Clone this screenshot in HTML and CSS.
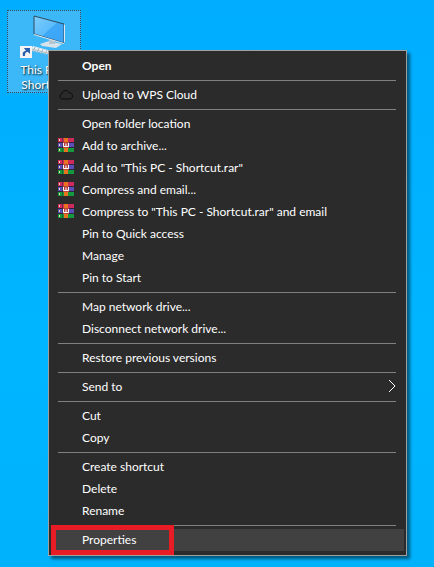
FILE: index.html
```
<!DOCTYPE html>
<html lang="en">
<head>
    <meta charset="UTF-8">
    <meta name="viewport" content="width=device-width, initial-scale=1.0">
    <title>Desktop</title>
    <link rel="stylesheet" href="styles.css">
</head>
<body>
    <svg class="sprite" width="0" height="0" aria-hidden="true">
        <symbol id="rar" viewBox="0 0 16 14">
            <rect width="16" height="4" fill="#cf2a5c"/>
            <rect y="5" width="16" height="4" fill="#5a4fb8"/>
            <rect y="10" width="16" height="4" fill="#129a3c"/>
            <path d="M0 4h16v1H0zM0 9h16v1H0z" fill="#33203a"/>
            <path d="M1 1h1v2H1zM1 6h1v2H1zM1 11h1v2H1z" fill="#f0d8b0"/>
            <path d="M4 0h1v4H4zM4 5h1v4H4zM4 10h1v4H4z" fill="#2b2b2b" opacity="0.5"/>
            <rect x="6" width="4" height="14" fill="#e87420"/>
            <rect x="5" y="4" width="6" height="6" fill="#b8453c"/>
            <path d="M5.500 5v3.500h5V5M8 5.500V9" fill="none" stroke="#fff" stroke-width="1"/>
        </symbol>
    </svg>

    <div class="desktop">
        <a href="#" class="shortcut">
            <svg class="pc" viewBox="0 0 48 40" width="48" height="40" aria-hidden="true">
                <defs>
                    <linearGradient id="screen" x1="0" y1="0" x2="1" y2="1">
                        <stop offset="0" stop-color="#7fcdfc"/>
                        <stop offset="0.500" stop-color="#5bbcfb"/>
                        <stop offset="0.510" stop-color="#3fa9f8"/>
                        <stop offset="1" stop-color="#3aa2f4"/>
                    </linearGradient>
                </defs>
                <path d="M20 29l9-3 13 3-6 4-14-2z" fill="#d5e2ea"/>
                <path d="M29 23h6v6h-6z" fill="#b4c6d1"/>
                <path d="M14 1l30 8v19l-30-9z" fill="url(#screen)" stroke="#2c4a60" stroke-width="1"/>
                <path d="M44 9l1 1v18l-1-1z" fill="#dce6ec"/>
                <path d="M14 19l30 9v1l-30-9z" fill="#e4edf2"/>
                <path d="M13 31l22 6v4L10 35z" fill="#e9eef1"/>
                <path d="M12 34l22 6M15 32l-2 5M19 33l-2 5M23 34l-2 5M27 35l-2 5" stroke="#a9b8c1" fill="none"/>
                <rect x="0" y="31" width="12" height="12" fill="#f4f4f4"/>
                <path d="M3 41c-1-4 1-5 3-5L4 33h6v6l-2-2c-3 0-3 2-3 4z" fill="#2b5fae"/>
            </svg>
            <span class="shortcut-name">This PC - Shortcut</span>
        </a>

        <div class="menu" role="menu">
            <button class="item default" role="menuitem">Open</button>
            <hr>
            <button class="item" role="menuitem">
                <svg class="icon" viewBox="0 0 16 14" aria-hidden="true">
                    <path d="M5 12C1 12 1 7 4 7c0-4 6-5 7-1 4-1 5 6 1 6z" fill="none" stroke="#0c0c0c" stroke-width="1"/>
                </svg>
                Upload to WPS Cloud
            </button>
            <hr>
            <button class="item" role="menuitem">Open folder location</button>
            <button class="item" role="menuitem"><svg class="icon"><use href="#rar"/></svg>Add to archive...</button>
            <button class="item" role="menuitem"><svg class="icon"><use href="#rar"/></svg>Add to "This PC - Shortcut.rar"</button>
            <button class="item" role="menuitem"><svg class="icon"><use href="#rar"/></svg>Compress and email...</button>
            <button class="item" role="menuitem"><svg class="icon"><use href="#rar"/></svg>Compress to "This PC - Shortcut.rar" and email</button>
            <button class="item" role="menuitem">Pin to Quick access</button>
            <button class="item" role="menuitem">Manage</button>
            <button class="item" role="menuitem">Pin to Start</button>
            <hr>
            <button class="item" role="menuitem">Map network drive...</button>
            <button class="item" role="menuitem">Disconnect network drive...</button>
            <hr>
            <button class="item" role="menuitem">Restore previous versions</button>
            <hr>
            <button class="item" role="menuitem" aria-haspopup="true">
                Send to
                <svg class="arrow" viewBox="0 0 8 14" width="8" height="14" aria-hidden="true">
                    <path d="M1 1l6 6-6 6" fill="none" stroke="#fff" stroke-width="1"/>
                </svg>
            </button>
            <hr>
            <button class="item" role="menuitem">Cut</button>
            <button class="item" role="menuitem">Copy</button>
            <hr>
            <button class="item" role="menuitem">Create shortcut</button>
            <button class="item" role="menuitem">Delete</button>
            <button class="item" role="menuitem">Rename</button>
            <hr>
            <button class="item active" role="menuitem">Properties</button>
        </div>
    </div>
</body>
</html>
```
FILE: styles.css
```
*,
*::after {
    box-sizing: border-box;
}
body {
    margin: 0;
    font-family: Lato, "Open Sans", sans-serif;
    font-size: 12px;
    color: #fff;
}
.sprite {
    position: absolute;
}
.desktop {
    position: relative;
    min-height: 100vh;
    padding: 10px 7px;
    background: linear-gradient(to bottom, #00adff, #00b5ff 60%, #00b2fc);
}

/* Desktop shortcut */
.shortcut {
    display: flex;
    flex-direction: column;
    align-items: center;
    width: 74px;
    height: 83px;
    padding-top: 4px;
    border: 1px dotted #33485a;
    background: #3cb8f8;
    color: #fff;
    text-decoration: none;
}
.pc {
    flex: none;
    margin-bottom: 7px;
    overflow: visible;
}
.shortcut-name {
    width: 60px;
    line-height: 15px;
    text-align: center;
    text-shadow: 1px 1px 2px #000;
}

/* Context menu */
.menu {
    position: absolute;
    top: 50px;
    left: 48px;
    right: 27px;
    padding: 4px 2px;
    border: 1px solid #a0a0a0;
    background: #2b2b2b;
    box-shadow: 3px 3px 3px rgba(0, 0, 0, 0.5);
}
.item {
    position: relative;
    display: flex;
    align-items: center;
    width: 100%;
    height: 22px;
    padding: 0 8px 2px 31px;
    border: 0;
    background: none;
    color: #fff;
    font: inherit;
    text-align: left;
    white-space: nowrap;
}
.item:hover,
.item.active {
    background: #414141;
}
.item.default {
    font-weight: 700;
}
.icon {
    width: 16px;
    height: 14px;
    margin-left: -24px;
    margin-right: 8px;
}
.arrow {
    margin-left: auto;
}
hr {
    height: 1px;
    margin: 3px 8px 3px 7px;
    border: 0;
    background: #808080;
}
/* Red frame round the picked item */
.item.active::after {
    content: "";
    position: absolute;
    top: -4px;
    bottom: -4px;
    left: 0;
    width: 123px;
    border: 5px solid #e81c24;
}
```
